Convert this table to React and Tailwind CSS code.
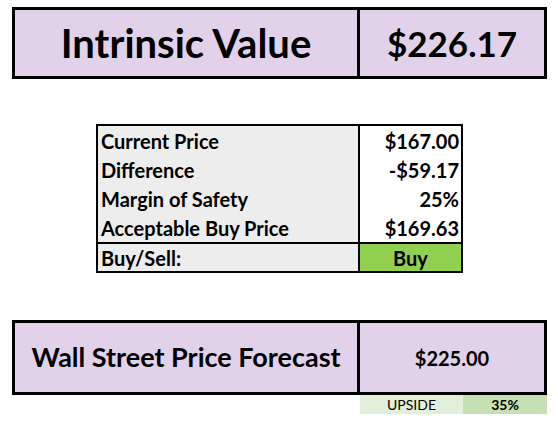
import React from 'react';

const rows = [
    { label: 'Current Price', value: '$167.00' },
    { label: 'Difference', value: '-$59.17' },
    { label: 'Margin of Safety', value: '25%' },
    { label: 'Acceptable Buy Price', value: '$169.63' },
];

export default function App() {
    return (
        <div className="w-[558px] h-[425px] bg-white text-black font-['Lato',sans-serif] pt-[7px] pl-3">
            {/* Intrinsic value header */}
            <div className="flex w-[535px] h-[72px] border-[3px] border-black bg-[#e1d2e9]">
                <div className="w-[345px] flex items-center justify-center border-r-[3px] border-black text-[40px] font-bold">
                    Intrinsic Value
                </div>
                <div className="flex-1 flex items-center justify-center text-[35px] font-bold">
                    $226.17
                </div>
            </div>

            {/* Price table */}
            <div className="ml-[84px] mt-[45px] w-[367px] border-2 border-black text-[20px] font-bold">
                {rows.map((r) => (
                    <div key={r.label} className="flex h-[29px]">
                        <div className="w-[262px] bg-[#ededed] border-r-2 border-black pl-[3px] flex items-center">
                            {r.label}
                        </div>
                        <div className="flex-1 bg-white flex items-center justify-end pr-[2px]">
                            {r.value}
                        </div>
                    </div>
                ))}
                <div className="flex h-[29px] border-t-2 border-black">
                    <div className="w-[262px] bg-[#ededed] border-r-2 border-black pl-[3px] flex items-center">
                        Buy/Sell:
                    </div>
                    <div className="flex-1 bg-[#92d050] flex items-center justify-center">
                        Buy
                    </div>
                </div>
            </div>

            {/* Wall street forecast */}
            <div className="mt-[47px] flex w-[535px] h-[75px] border-[3px] border-black bg-[#e1d2e9]">
                <div className="w-[345px] flex items-center justify-center border-r-[3px] border-black text-[27px] font-bold">
                    Wall Street Price Forecast
                </div>
                <div className="flex-1 flex items-center justify-center text-[20px] font-bold">
                    $225.00
                </div>
            </div>
            <div className="ml-[348px] flex w-[187px] h-[19px] text-[14px]">
                <div className="w-[103px] bg-[#e2efda] flex items-center justify-center">UPSIDE</div>
                <div className="flex-1 bg-[#c6e0b4] flex items-center justify-center font-bold">35%</div>
            </div>
        </div>
    );
}
